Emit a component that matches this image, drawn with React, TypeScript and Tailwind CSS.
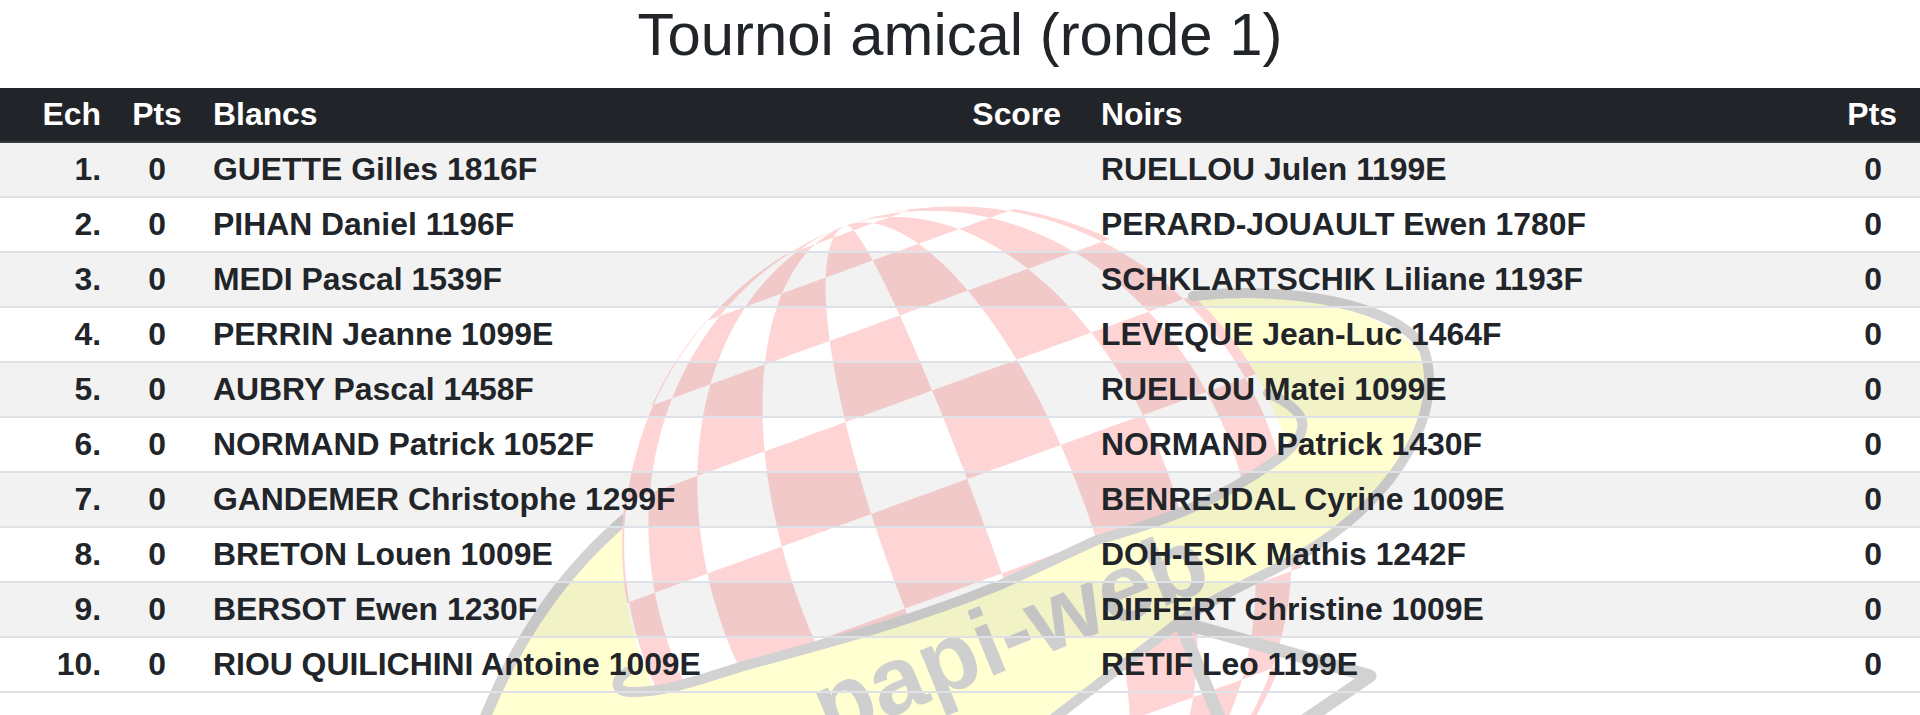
const whitePairs = [
  ["1.", "GUETTE Gilles 1816F", "RUELLOU Julen 1199E"],
  ["2.", "PIHAN Daniel 1196F", "PERARD-JOUAULT Ewen 1780F"],
  ["3.", "MEDI Pascal 1539F", "SCHKLARTSCHIK Liliane 1193F"],
  ["4.", "PERRIN Jeanne 1099E", "LEVEQUE Jean-Luc 1464F"],
  ["5.", "AUBRY Pascal 1458F", "RUELLOU Matei 1099E"],
  ["6.", "NORMAND Patrick 1052F", "NORMAND Patrick 1430F"],
  ["7.", "GANDEMER Christophe 1299F", "BENREJDAL Cyrine 1009E"],
  ["8.", "BRETON Louen 1009E", "DOH-ESIK Mathis 1242F"],
  ["9.", "BERSOT Ewen 1230F", "DIFFERT Christine 1009E"],
  ["10.", "RIOU QUILICHINI Antoine 1009E", "RETIF Leo 1199E"],
];

// checker ball: orthographic sphere, pole sitting on the limb
const CX = 962;
const CY = 545;
const R = 340;
const TILT = (20 * Math.PI) / 180;
const LAT_STEP = 17;
const LON_STEP = 17.6;
const LAT_0 = 10.2;
const LON_0 = 4.7;

function project(lat: number, lon: number) {
  const la = (lat * Math.PI) / 180;
  const lo = (lon * Math.PI) / 180;
  const u = R * Math.cos(la) * Math.sin(lo);
  const v = R * Math.sin(la);
  const x = CX + u * Math.cos(TILT) - v * Math.sin(TILT);
  const y = CY - u * Math.sin(TILT) - v * Math.cos(TILT);
  return `${x.toFixed(1)} ${y.toFixed(1)}`;
}

function checkerPaths() {
  const out: string[] = [];
  for (let j = -7; j <= 5; j++) {
    for (let k = -7; k <= 6; k++) {
      if ((j + k) % 2 !== 0) continue;
      const lat1 = Math.max(-90, LAT_0 + j * LAT_STEP);
      const lat2 = Math.min(90, LAT_0 + (j + 1) * LAT_STEP);
      const lon1 = Math.max(-90, LON_0 + k * LON_STEP);
      const lon2 = Math.min(90, LON_0 + (k + 1) * LON_STEP);
      if (lat1 >= lat2 || lon1 >= lon2) continue;
      const pts: string[] = [];
      for (let t = 0; t <= 8; t++) pts.push(project(lat1, lon1 + ((lon2 - lon1) * t) / 8));
      for (let t = 0; t <= 8; t++) pts.push(project(lat1 + ((lat2 - lat1) * t) / 8, lon2));
      for (let t = 0; t <= 8; t++) pts.push(project(lat2, lon2 - ((lon2 - lon1) * t) / 8));
      for (let t = 0; t <= 8; t++) pts.push(project(lat2 - ((lat2 - lat1) * t) / 8, lon1));
      out.push("M" + pts.join("L") + "Z");
    }
  }
  return out.join("");
}

function Logo() {
  return (
    <svg className="absolute top-0 left-0 -z-10 blur-[0.6px]" width="1920" height="715" viewBox="0 0 1920 715">
      {/* ribbon behind the ball */}
      <path
        d="M470 735C520 630 570 560 640 505L1193 295C1290 285 1400 310 1430 368C1440 430 1390 500 1317 545C1280 570 1215 595 1175 625L1040 735Z"
        fill="#ffffd2"
      />
      <path
        d="M482 725C520 630 570 565 630 515"
        fill="none"
        stroke="#d2d2d2"
        strokeWidth="11"
      />
      <circle cx={CX} cy={CY} r={R} fill="#ffffff" />
      <path d={checkerPaths()} fill="#ffd4d4" />
      {/* ribbon in front */}
      <path
        d="M625 692C650 696 700 678 747 665C840 640 920 618 1000 585L1097 540C1150 525 1217 505 1283 455C1312 430 1310 412 1262 393L1433 368C1440 430 1390 500 1317 545C1280 570 1215 595 1175 625L1040 735L600 735Z"
        fill="#ffffd2"
      />
      <g fill="none" stroke="#d2d2d2" strokeLinecap="round" strokeLinejoin="round">
        <path
          d="M1193 296C1290 285 1400 305 1424 350C1445 410 1400 490 1317 545C1280 570 1215 595 1175 625L1045 725"
          strokeWidth="10"
        />
        <path
          d="M627 672C612 682 616 692 632 692C670 692 710 676 747 665C840 640 920 618 1000 585L1097 540C1150 525 1217 505 1283 455C1312 430 1310 412 1268 393"
          strokeWidth="10"
        />
        <path d="M1180 622L1370 676L1298 725" strokeWidth="13" />
        <path d="M1180 622L1222 725" strokeWidth="13" />
      </g>
      <text
        x="829"
        y="742"
        transform="rotate(-22 829 742)"
        fill="#cfcfcf"
        fontFamily="'Liberation Sans', Arial, sans-serif"
        fontSize="96"
        fontWeight="700"
      >
        papi-web
      </text>
    </svg>
  );
}

export default function App() {
  return (
    <div className="relative isolate h-[715px] w-[1920px] overflow-hidden font-['Liberation_Sans',Arial,sans-serif] text-[#212529]">
      <Logo />
      <h1 className="h-[88px] text-center text-[59.8px] leading-[70px] font-normal">
        Tournoi amical (ronde 1)
      </h1>
      <table className="w-full table-fixed border-collapse text-[31.9px] leading-[38px] font-bold">
        <colgroup>
          <col className="w-[117px]" />
          <col className="w-[80px]" />
          <col />
          <col className="w-[190px]" />
          <col className="w-[756px]" />
          <col className="w-[87px]" />
        </colgroup>
        <thead>
          <tr className="h-[54px] border-b-2 border-[#373b3e] bg-[#212529] text-white">
            <th className="pr-4 pb-[1px] text-right">Ech</th>
            <th className="pb-[1px] text-center">Pts</th>
            <th className="pb-[1px] pl-4 text-left">Blancs</th>
            <th className="pr-4 pb-[1px] text-right">Score</th>
            <th className="pb-[1px] pl-6 text-left">Noirs</th>
            <th className="pr-[23px] pb-[1px] text-right">Pts</th>
          </tr>
        </thead>
        <tbody>
          {whitePairs.map((row, i) => (
            <tr
              key={row[0]}
              className={`h-[55px] border-b-2 border-[#dee2e6] ${i % 2 === 0 ? "bg-black/5" : ""}`}
            >
              <td className="pr-4 pb-[1px] text-right">{row[0]}</td>
              <td className="pb-[1px] text-center">0</td>
              <td className="pb-[1px] pl-4 whitespace-nowrap">{row[1]}</td>
              <td></td>
              <td className="pb-[1px] pl-6 whitespace-nowrap">{row[2]}</td>
              <td className="pr-[23px] pb-[1px] pl-4 text-center">0</td>
            </tr>
          ))}
        </tbody>
      </table>
    </div>
  );
}
